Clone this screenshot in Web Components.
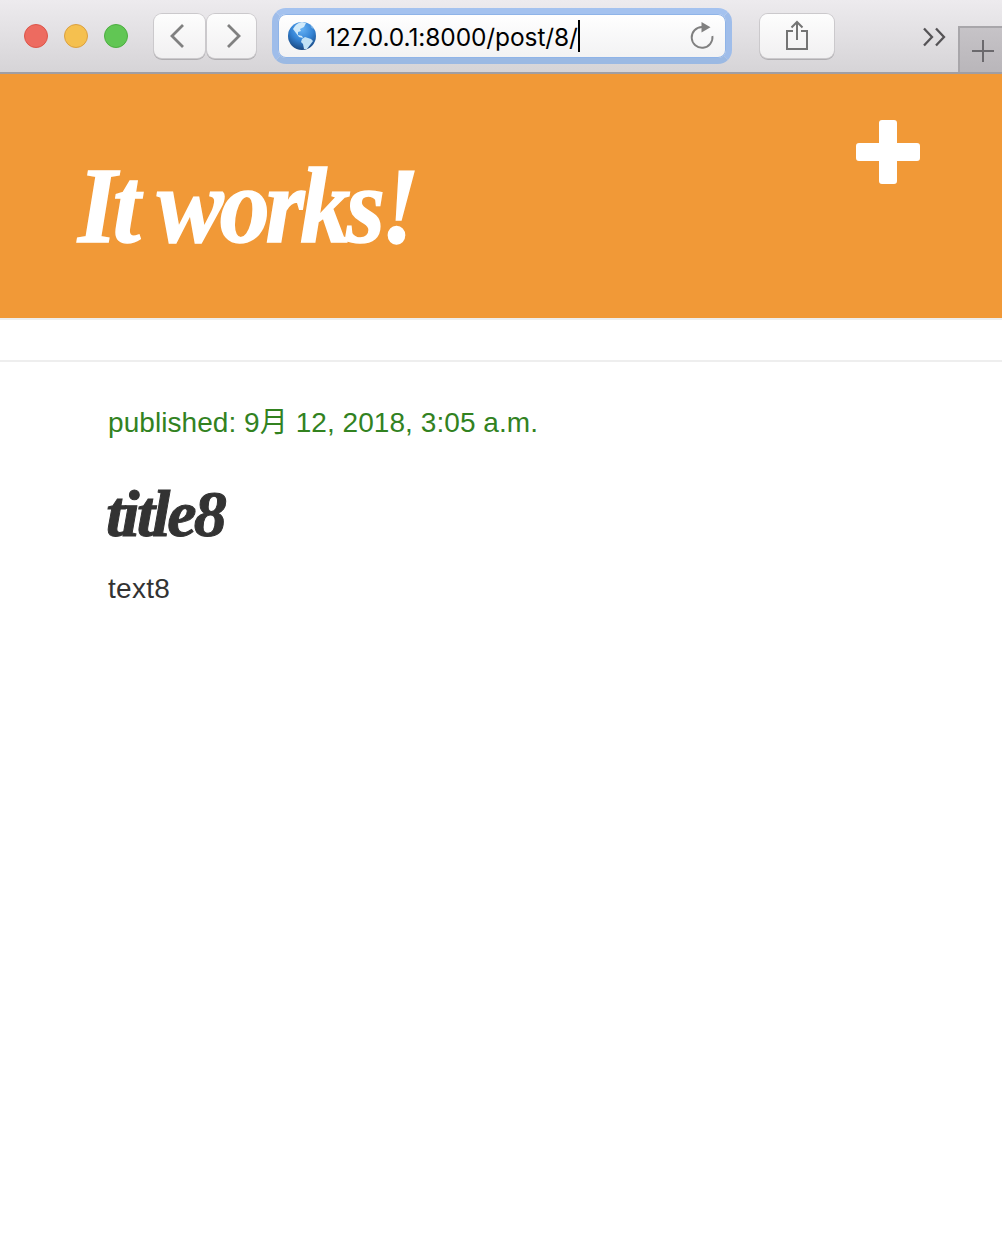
<!DOCTYPE html>
<html lang="en">
<head>
<meta charset="utf-8">
<title>It works!</title>
<style>
html,body{margin:0;padding:0;background:#fff}
body{width:1002px;height:1234px;overflow:hidden;font-family:"Liberation Sans","Noto Sans CJK JP",sans-serif}
</style>
</head>
<body>
<browser-window>
  <browser-toolbar slot="toolbar">127.0.0.1:8000/post/8/</browser-toolbar>
  <page-header>It works!</page-header>
  <blog-post>
    <span slot="date">published: 9月 12, 2018, 3:05 a.m.</span>
    <span slot="title">title8</span>
    <span slot="text">text8</span>
  </blog-post>
</browser-window>
<script>
const define = (name, html) => customElements.define(name, class extends HTMLElement {
  constructor() {
    super();
    this.attachShadow({mode: 'open'}).innerHTML = html;
  }
});

define('browser-window', `
<style>:host{display:flex;flex-direction:column;width:1002px;height:1234px;background:#fff}</style>
<slot name="toolbar"></slot><slot></slot>`);

define('window-lights', `
<style>
:host{display:flex;gap:16px}
i{box-sizing:border-box;width:24px;height:24px;border-radius:50%;border:1.5px solid #dc5549;background:#ed6b60}
i:nth-of-type(2){background:#f5c04f;border-color:#dba040}
i:nth-of-type(3){background:#61c654;border-color:#4cae40}
</style><i></i><i></i><i></i>`);

define('tool-button', `
<style>
:host{box-sizing:border-box;display:flex;align-items:center;justify-content:center;height:44px;border-radius:8px;
background:linear-gradient(#fdfdfd,#f1f0f1);box-shadow:0 0 0 1px #cbc9cc,0 1.5px 0 0.5px #b0aeb1}
</style><slot></slot>`);

define('address-field', `
<style>
:host{box-sizing:border-box;display:flex;align-items:center;width:460px;height:56px;border:6px solid #a0bfeb;border-color:#a4c2ef #9fbdea #9bb9e3;border-radius:14px;background:linear-gradient(#fff,#f2f2f3);background-clip:padding-box;box-shadow:inset 0 0 0 1px #8fb4e8;padding:0 11px 0 9px}
svg{display:block;flex:none}
.url{margin:2px 0 0 9px;font:24.5px/34px Inter,"Liberation Sans",sans-serif;letter-spacing:-.1px;color:#000;white-space:nowrap}
.caret{width:2px;height:32px;background:#000;margin-top:-1px}
.reload{margin-left:auto}
</style>
<svg width="30" height="30" viewBox="0 0 30 30">
<defs><radialGradient id="g" cx=".5" cy=".25" r=".8"><stop offset="0" stop-color="#65b2f5"/><stop offset=".5" stop-color="#3483d4"/><stop offset="1" stop-color="#154077"/></radialGradient></defs>
<circle cx="15" cy="15" r="14" fill="url(#g)"/>
<path d="M6 8Q9 2 15 1l4 1-2 4-4 2 1 2-3 1 0 3 4 1 1 2-4-1-3-4z" fill="#d0eafa"/>
<path d="M15 18l3-2 6 2 2 2-3 4-3 4-3 0-1-5-2-2z" fill="#c2e2f6"/>
<path d="M23 4l4 4-2-1z" fill="#bfe0f4"/>
</svg>
<span class="url"><slot></slot></span><span class="caret"></span>
<svg class="reload" width="26" height="30" viewBox="0 0 26 30"><path d="M14 5.500H13A10.400 10.400 0 1 0 23.400 14.500" fill="none" stroke="#808080" stroke-width="1.900" transform="translate(0 .5)"/><path d="M12.500 1v10.500L21.500 6.300z" fill="#808080"/></svg>`);

define('browser-toolbar', `
<style>
:host{box-sizing:border-box;display:flex;align-items:center;width:1002px;height:74px;padding-left:24px;border-bottom:2px solid #a09ea3;background:linear-gradient(#edebee,#d6d4d7)}
svg{display:block}
window-lights{margin-right:26px}
.back{width:51px;margin-right:2px}.fwd{width:49px;margin-right:16px}
address-field{margin-right:28px}
.share{width:74px;margin-right:88px}
.tab{box-sizing:border-box;align-self:flex-end;margin-left:auto;width:44px;height:46px;border:solid #a8a6aa;border-width:2px 0 0 2px;background:linear-gradient(#c6c3c7,#b9b6ba);display:flex;align-items:center;padding-left:12px;padding-top:2px}
</style>
<window-lights></window-lights>
<tool-button class="back"><svg width="24" height="28" viewBox="0 0 24 28"><path d="M15 3L4 14 15 25" fill="none" stroke="#808080" stroke-width="2.800"/></svg></tool-button>
<tool-button class="fwd"><svg width="24" height="28" viewBox="0 0 24 28"><path d="M8 3l11 11L8 25" fill="none" stroke="#808080" stroke-width="2.800"/></svg></tool-button>
<address-field><slot></slot></address-field>
<tool-button class="share"><svg width="24" height="32" viewBox="0 0 24 32"><path d="M8 11H2v18h20V11h-6M12 20V2M6.500 7.500L12 2 17.500 7.500" fill="none" stroke="#747474" stroke-width="2"/></svg></tool-button>
<svg width="24" height="20" viewBox="0 0 24 20" style="margin-top:2px"><path d="M2 1.500L10 10l-8 8.500M14 1.500L22 10l-8 8.500" fill="none" stroke="#555356" stroke-width="2.300"/></svg>
<span class="tab"><svg width="22" height="22" viewBox="0 0 22 22"><path d="M0 11h22M11 0v22" stroke="#6b696d" stroke-width="2"/></svg></span>`);

define('page-header', `
<style>
:host{box-sizing:border-box;display:flex;justify-content:space-between;align-items:flex-start;height:246px;background:#f19937;border-bottom:2px solid #eee;padding:46px 82px 0 78px}
h1{margin:24px 0 0;font:italic 700 107px/124px "Liberation Serif",serif;letter-spacing:-4.500px;color:#fff;white-space:nowrap;transform:scaleX(.935);transform-origin:0 0;-webkit-text-stroke:1.500px #fff}
svg{display:block;flex:none}
</style>
<h1><slot></slot></h1>
<svg width="64" height="64" viewBox="0 0 64 64"><path d="M26 0h12q3 0 3 3v20h20q3 0 3 3v12q0 3-3 3H41v20q0 3-3 3H26q-3 0-3-3V41H3q-3 0-3-3V26q0-3 3-3h20V3q0-3 3-3z" fill="#fff"/></svg>`);

define('blog-post', `
<style>
:host{box-sizing:border-box;display:flex;flex-direction:column;margin-top:40px;border-top:2px solid #eee;padding:41px 108px 0;color:#333;font:28px/40px "Liberation Sans","Noto Sans CJK JP",sans-serif}
.date{color:#32821f;height:40px;white-space:nowrap;letter-spacing:.06px}
h2{margin:38px 0 0;height:66px;font:italic 700 66px/66px "Liberation Serif",serif;letter-spacing:-3px;white-space:nowrap;transform:translateX(-2px);-webkit-text-stroke:1px #333}
p{margin:22px 0 0;letter-spacing:.3px}
</style>
<div class="date"><slot name="date"></slot></div>
<h2><slot name="title"></slot></h2>
<p><slot name="text"></slot></p>`);
</script>
</body>
</html>
